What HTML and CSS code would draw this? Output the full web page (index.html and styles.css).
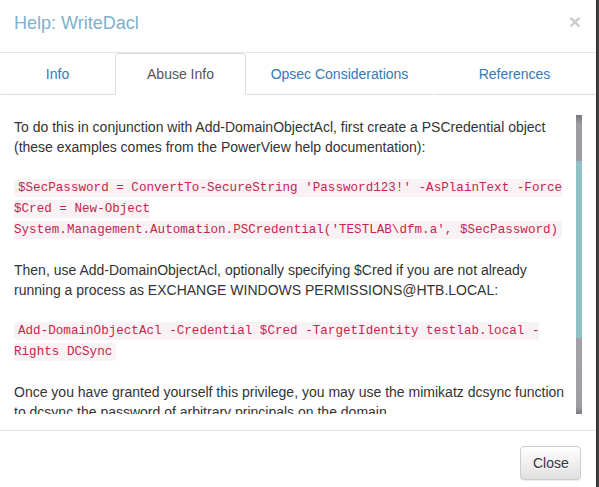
FILE: index.html
```html
<!DOCTYPE html>
<html>
<head>
<meta charset="utf-8">
<link rel="stylesheet" href="styles.css">
</head>
<body>
<div class="modal">
  <div class="modal-header">
    <h4 class="modal-title">Help: WriteDacl</h4>
    <button class="close" type="button">×</button>
  </div>
  <ul class="tabs">
    <li class="tab"><a>Info</a></li>
    <li class="tab active"><a>Abuse Info</a></li>
    <li class="tab"><a>Opsec Considerations</a></li>
    <li class="tab"><a>References</a></li>
  </ul>
  <div class="modal-body">
    <div class="scroll">
      <div class="content">
        <p>To do this in conjunction with Add-DomainObjectAcl, first create a PSCredential object (these examples comes from the PowerView help documentation):</p>
        <p class="code-p"><code>$SecPassword = ConvertTo-SecureString 'Password123!' -AsPlainText -Force
$Cred = New-Object System.Management.Automation.PSCredential('TESTLAB\dfm.a', $SecPassword)</code></p>
        <p>Then, use Add-DomainObjectAcl, optionally specifying $Cred if you are not already running a process as EXCHANGE WINDOWS PERMISSIONS@HTB.LOCAL:</p>
        <p class="code-p"><code>Add-DomainObjectAcl -Credential $Cred -TargetIdentity testlab.local -Rights DCSync</code></p>
        <p>Once you have granted yourself this privilege, you may use the mimikatz dcsync function to dcsync the password of arbitrary principals on the domain</p>
      </div>
      <div class="bar">
        <div class="bar-top"></div>
        <div class="bar-thumb"></div>
        <div class="bar-rest"></div>
      </div>
    </div>
  </div>
  <div class="modal-footer">
    <button class="btn" type="button">Close</button>
  </div>
</div>
</body>
</html>
```
FILE: styles.css
```css
* { box-sizing: border-box; }

html, body {
  margin: 0;
  padding: 0;
  height: 100%;
}

body {
  background: #404040;
  font-family: "Liberation Sans", Arial, sans-serif;
  font-size: 14px;
  line-height: 20px;
  color: #333;
  overflow: hidden;
}

.modal {
  width: 597px;
  height: 487px;
  background: #fff;
  border-right: 1px solid #2e2e2e;
  display: flex;
  flex-direction: column;
  overflow: hidden;
}

.modal-header {
  flex: none;
  display: flex;
  justify-content: space-between;
  align-items: flex-start;
  padding: 10px 15px 16px 14px;
  border-bottom: 1px solid #e5e5e5;
  height: 53px;
}

.modal-title {
  margin: 0;
  font-size: 18px;
  font-weight: 400;
  line-height: 26px;
  color: #7fb1ca;
}

.close {
  padding: 0;
  margin: 1px 0 0 0;
  border: 0;
  background: none;
  font-family: "Liberation Sans", Arial, sans-serif;
  font-size: 21px;
  font-weight: bold;
  line-height: 21px;
  color: #000;
  opacity: 0.2;
}

.tabs {
  flex: none;
  list-style: none;
  margin: 0;
  padding: 0;
  display: grid;
  grid-template-columns: 115px 131px 187px 163px;
  height: 42px;
}

.tab a {
  display: block;
  text-align: center;
  padding: 10px 15px;
  line-height: 20px;
  color: #337ab7;
  border: 1px solid transparent;
  border-bottom: 1px solid #ddd;
  border-radius: 4px 4px 0 0;
}

.tab.active a {
  color: #555;
  border: 1px solid #ddd;
  border-bottom-color: #fff;
}

.modal-body {
  flex: none;
  height: 335px;
  padding: 20px 14px 16px 14px;
}

.scroll {
  display: flex;
  height: 299px;
}

.content {
  flex: 1;
  min-width: 0;
  overflow: hidden;
  padding-top: 2px;
}

.content p {
  margin: 0 0 20px 0;
}

.content p.code-p {
  font-family: "Liberation Mono", "Courier New", monospace;
  font-size: 12.6px;
  line-height: 21px;
  padding-top: 1px;
  margin-bottom: 19px;
}

code {
  font-family: "Liberation Mono", "Courier New", monospace;
  font-size: 12.6px;
  line-height: 21px;
  color: #c7254e;
  background: #f9f2f4;
  padding: 2px 4px;
  border-radius: 4px;
}

.bar {
  flex: none;
  width: 6px;
  display: flex;
  flex-direction: column;
  background: #9e9ea5;
  box-shadow: inset 0 0 1px rgba(0, 0, 0, 0.5);
}

.bar-top {
  flex: none;
  height: 46px;
  background: linear-gradient(to bottom, #76767c, #9d9da3 20%, #9e9ea5);
}

.bar-thumb {
  flex: none;
  height: 177px;
  background: #8fc0c3;
}

.bar-rest {
  flex: 1;
  background: linear-gradient(to bottom, #a2a2a9, #9e9ea5 90%, #7a7a80);
}

.modal-footer {
  flex: none;
  display: flex;
  justify-content: flex-end;
  padding: 15px 15px 15px 15px;
  border-top: 1px solid #e5e5e5;
}

.btn {
  height: 34px;
  width: 61px;
  padding: 6px 12px;
  font-family: "Liberation Sans", Arial, sans-serif;
  font-size: 14px;
  line-height: 20px;
  color: #333;
  text-shadow: 0 1px 0 #fff;
  background: linear-gradient(to bottom, #fff 0, #e0e0e0 100%);
  border: 1px solid #ccc;
  border-radius: 4px;
  box-shadow: inset 0 1px 0 rgba(255, 255, 255, 0.15), 0 1px 1px rgba(0, 0, 0, 0.075);
}
```
